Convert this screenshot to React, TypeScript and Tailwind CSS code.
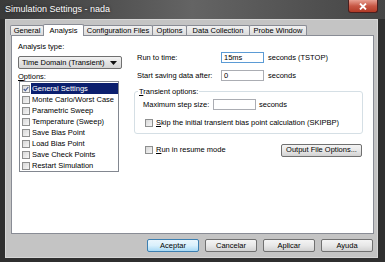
import React from 'react';

const tabs = [
    { label: 'General', w: 'w-[34px]' },
    { label: 'Analysis', w: 'w-[41px]', active: true },
    { label: 'Configuration Files', w: 'w-[70px]' },
    { label: 'Options', w: 'w-[35px]' },
    { label: 'Data Collection', w: 'w-[64px]' },
    { label: 'Probe Window', w: 'w-[58px]' },
];

const options = [
    'General Settings',
    'Monte Carlo/Worst Case',
    'Parametric Sweep',
    'Temperature (Sweep)',
    'Save Bias Point',
    'Load Bias Point',
    'Save Check Points',
    'Restart Simulation',
];

const CheckBox: React.FC<{ checked?: boolean }> = ({ checked }) => (
    <span className="flex-shrink-0 w-[8px] h-[8px] border border-[#8e8f8f] bg-gradient-to-br from-[#d8d8d8] to-[#f6f6f6] flex items-center justify-center">
        {checked && (
            <svg width="6" height="6" viewBox="0 0 6 6">
                <path d="M0.7 3 L2.4 4.7 L5.3 1" stroke="#4a5f97" strokeWidth="1.2" fill="none" />
            </svg>
        )}
    </span>
);

const TextBox: React.FC<{ value?: string; w: string; focused?: boolean }> = ({ value, w, focused }) => (
    <div className={`${w} h-[11px] bg-white border ${focused ? 'border-[#5b9bd5]' : 'border-[#abadb3]'} flex items-center pl-[2px]`}>
        {value}
    </div>
);

const Button: React.FC<{ label: React.ReactNode; primary?: boolean; w?: string }> = ({ label, primary, w = 'w-[52px]' }) => (
    <div
        className={`${w} h-[13px] rounded-[2px] border flex items-center justify-center ${
            primary
                ? 'border-[#3c7fb1] bg-gradient-to-b from-[#eaf6fd] via-[#d9f0fc] to-[#a7d9f5]'
                : 'border-[#707070] bg-gradient-to-b from-[#f4f4f4] via-[#e8e8e8] to-[#d2d2d2]'
        }`}
    >
        {label}
    </div>
);

export default function App() {
    return (
        <div className="w-[385px] h-[262px] flex flex-col bg-[#2f2f2f] overflow-hidden text-[7.5px] leading-none text-black font-['Liberation_Sans',Arial,sans-serif]">
            {/* title bar */}
            <div className="h-[19px] flex-shrink-0 flex items-start bg-gradient-to-r from-[#3a3a3a] via-[#646464] to-[#454545]">
                <div className="pl-[5px] pt-[5px] text-[9px] text-white [text-shadow:0_0_3px_#222]">
                    Simulation Settings - nada
                </div>
                <div className="ml-auto mr-[7px] w-[30px] h-[13px] rounded-b-[3px] border border-t-0 border-[#4a1f1f] bg-gradient-to-b from-[#e8a093] via-[#c75745] to-[#b23a26] flex items-center justify-center">
                    <svg width="8" height="7" viewBox="0 0 8 7">
                        <path d="M1 0.5 L7 6.5 M7 0.5 L1 6.5" stroke="#fff" strokeWidth="1.8" />
                    </svg>
                </div>
            </div>

            {/* frame + client */}
            <div className="flex-1 flex pl-[5px] pr-[7px] pb-[4px]">
                <div className="flex-1 flex flex-col bg-[#c4c4c4] border border-[#d6d6d6]">
                    {/* tab strip */}
                    <div className="flex items-end h-[11px] mt-[4px] ml-[5px]">
                        {tabs.map((t) =>
                            t.active ? (
                                <div
                                    key={t.label}
                                    className={`${t.w} h-[12px] -mb-px -ml-px relative z-10 bg-white border border-b-0 border-[#898c95] rounded-t-[2px] flex items-center justify-center`}
                                >
                                    {t.label}
                                </div>
                            ) : (
                                <div
                                    key={t.label}
                                    className={`${t.w} h-[10px] -ml-px bg-gradient-to-b from-[#f2f2f2] to-[#dcdcdc] border border-b-0 border-[#898c95] rounded-t-[2px] flex items-center justify-center`}
                                >
                                    {t.label}
                                </div>
                            )
                        )}
                    </div>

                    {/* panel */}
                    <div className="h-[199px] ml-[5px] mr-[3px] bg-white border border-[#898c95] flex">
                        {/* left column */}
                        <div className="w-[122px] flex-shrink-0 pl-[6px] pt-[7px] flex flex-col">
                            <div className="h-[9px]">Analysis type:</div>
                            <div className="mt-[4px] w-[104px] h-[13px] border border-[#707070] rounded-[2px] bg-gradient-to-b from-[#f2f2f2] to-[#d6d6d6] flex items-center pl-[3px]">
                                <span className="flex-1">Time Domain (Transient)</span>
                                <svg width="7" height="4" viewBox="0 0 7 4" className="mr-[4px]">
                                    <path d="M0 0 H7 L3.5 4 Z" fill="#111" />
                                </svg>
                            </div>
                            <div className="mt-[4px] h-[8px]">
                                <span className="underline">O</span>ptions:
                            </div>
                            <div className="ml-[1px] w-[100px] h-[91px] border border-[#828790] flex flex-col pt-[1px]">
                                {options.map((o, i) => (
                                    <div key={o} className="h-[11px] flex items-center pl-[2px]">
                                        <CheckBox checked={i === 0} />
                                        <span
                                            className={`flex-1 h-full flex items-center pl-[1px] ml-px ${
                                                i === 0 ? 'bg-[#0b1f6e] text-white' : ''
                                            }`}
                                        >
                                            {o}
                                        </span>
                                    </div>
                                ))}
                            </div>
                        </div>

                        {/* right column */}
                        <div className="w-[229px] flex-shrink-0 pt-[16px] flex flex-col">
                            <div className="flex items-center h-[11px] pl-[3px]">
                                <span className="w-[84px]">Run to time:</span>
                                <TextBox value="15ms" w="w-[43px]" focused />
                                <span className="ml-[4px]">seconds (TSTOP)</span>
                            </div>
                            <div className="flex items-center h-[11px] pl-[3px] mt-[7px]">
                                <span className="w-[84px]">Start saving data after:</span>
                                <TextBox value="0" w="w-[43px]" />
                                <span className="ml-[4px]">seconds</span>
                            </div>

                            <fieldset className="mt-[6px] border border-[#d5dfe5] rounded-[3px] h-[47px] px-[8px]">
                                <legend className="h-[9px] leading-[9px] px-[1px] ml-[-5px]">
                                    <span className="underline">T</span>ransient options:
                                </legend>
                                <div className="flex items-center h-[11px] mt-[3px]">
                                    <span className="w-[70px]">Maximum step size:</span>
                                    <TextBox w="w-[43px]" />
                                    <span className="ml-[3px]">seconds</span>
                                </div>
                                <div className="flex items-center h-[9px] mt-[8px] ml-[2px] gap-[3px]">
                                    <CheckBox />
                                    <span>
                                        <span className="underline">S</span>kip the initial transient bias point calculation (SKIPBP)
                                    </span>
                                </div>
                            </fieldset>

                            <div className="flex items-center h-[12px] mt-[10px] pl-[11px]">
                                <div className="flex items-center gap-[3px]">
                                    <CheckBox />
                                    <span>
                                        <span className="underline">R</span>un in resume mode
                                    </span>
                                </div>
                                <div className="ml-auto mr-[1px]">
                                    <Button label="Output File Options..." w="w-[81px]" />
                                </div>
                            </div>
                        </div>
                    </div>

                    {/* dialog buttons */}
                    <div className="flex justify-end gap-[6px] mt-[5px] mr-[4px]">
                        <Button label="Aceptar" primary />
                        <Button label="Cancelar" />
                        <Button label="Aplicar" />
                        <Button label="Ayuda" />
                    </div>
                </div>
            </div>
        </div>
    );
}
